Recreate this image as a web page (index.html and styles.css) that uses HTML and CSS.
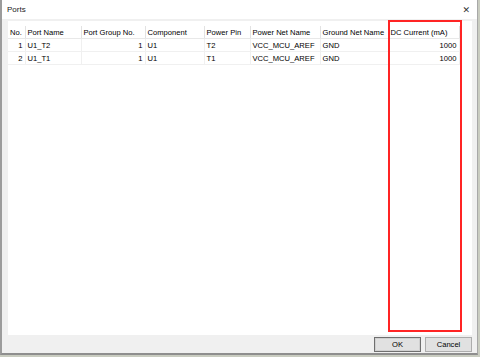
FILE: index.html
```html
<!DOCTYPE html>
<html lang="en">
<head>
  <meta charset="UTF-8" />
  <title>Ports</title>
  <link rel="stylesheet" href="styles.css">
</head>
<body>
  <div class="window">
    <div class="titlebar">
      <span class="title">Ports</span>
      <span class="close">&#x2715;</span>
    </div>
    <div class="content">
      <div class="grid">
        <table>
          <colgroup>
            <col style="width:17px">
            <col style="width:56px">
            <col style="width:64px">
            <col style="width:59px">
            <col style="width:46px">
            <col style="width:70px">
            <col style="width:68px">
            <col style="width:71px">
            <col>
          </colgroup>
          <thead>
            <tr>
              <th>No.</th>
              <th>Port Name</th>
              <th>Port Group No.</th>
              <th>Component</th>
              <th>Power Pin</th>
              <th>Power Net Name</th>
              <th>Ground Net Name</th>
              <th>DC Current (mA)</th>
              <th class="blank"></th>
            </tr>
          </thead>
          <tbody>
            <tr>
              <td class="num">1</td>
              <td>U1_T2</td>
              <td class="num">1</td>
              <td>U1</td>
              <td>T2</td>
              <td>VCC_MCU_AREF</td>
              <td>GND</td>
              <td class="num">1000</td>
              <td class="blank"></td>
            </tr>
            <tr>
              <td class="num">2</td>
              <td>U1_T1</td>
              <td class="num">1</td>
              <td>U1</td>
              <td>T1</td>
              <td>VCC_MCU_AREF</td>
              <td>GND</td>
              <td class="num">1000</td>
              <td class="blank"></td>
            </tr>
          </tbody>
        </table>
      </div>
      <div class="footer">
        <button class="btn default">OK</button>
        <button class="btn">Cancel</button>
      </div>
    </div>
    <div class="highlight"></div>
  </div>
</body>
</html>
```

FILE: styles.css
```css
html, body {
  margin: 0;
  padding: 0;
  height: 100%;
  overflow: hidden;
  background: #c9ccc0;
  font-family: 'Liberation Sans', Arial, sans-serif;
  font-size: 7.6px;
  color: #000;
}

.window {
  position: relative;
  width: 475px;
  height: 353px;
  border-left: 2px solid #9c9c9c;
  border-right: 1px solid #a8a8a8;
  border-bottom: 2px solid #8e8e8e;
  background: #f0f0f0;
  display: flex;
  flex-direction: column;
}

.titlebar {
  height: 19px;
  background: #ffffff;
  display: flex;
  align-items: center;
  justify-content: space-between;
  padding: 0 7px 0 5px;
  flex-shrink: 0;
}

.title {
  font-size: 8px;
  color: #222;
}

.close {
  font-family: 'DejaVu Sans', sans-serif;
  font-size: 9px;
  color: #333;
}

.content {
  flex: 1;
  display: flex;
  flex-direction: column;
  padding: 2px 5px 0 6px;
}

.grid {
  height: 314px;
  background: #fff;
  padding-top: 5px;
  box-sizing: border-box;
}

table {
  width: 100%;
  table-layout: fixed;
  border-collapse: collapse;
}

th {
  height: 12px;
  padding: 0 2px;
  font-weight: normal;
  text-align: left;
  white-space: nowrap;
  overflow: hidden;
  border-right: 1px solid #e2e2e2;
  border-bottom: 1px solid #e8e8e8;
  background: #fff;
}

td {
  height: 12px;
  padding: 0 2px;
  white-space: nowrap;
  overflow: hidden;
  border-right: 1px solid #f0f0f0;
  border-bottom: 1px solid #f0f0f0;
}

td.num {
  text-align: right;
}

th.blank, td.blank {
  border: none;
}

.footer {
  display: flex;
  justify-content: flex-end;
  gap: 4px;
  padding: 2px 0 0 0;
}

.btn {
  width: 47px;
  height: 15px;
  padding: 0;
  font-family: 'Liberation Sans', Arial, sans-serif;
  font-size: 7.6px;
  color: #000;
  background: #e1e1e1;
  border: 1px solid #adadad;
}

.btn.default {
  border: 1px solid #6f6f6f;
  box-shadow: inset 0 0 0 1px #d0d0d0;
}

.highlight {
  position: absolute;
  left: 386px;
  top: 20px;
  width: 70px;
  height: 308px;
  border: 2px solid #ff2424;
}
```
